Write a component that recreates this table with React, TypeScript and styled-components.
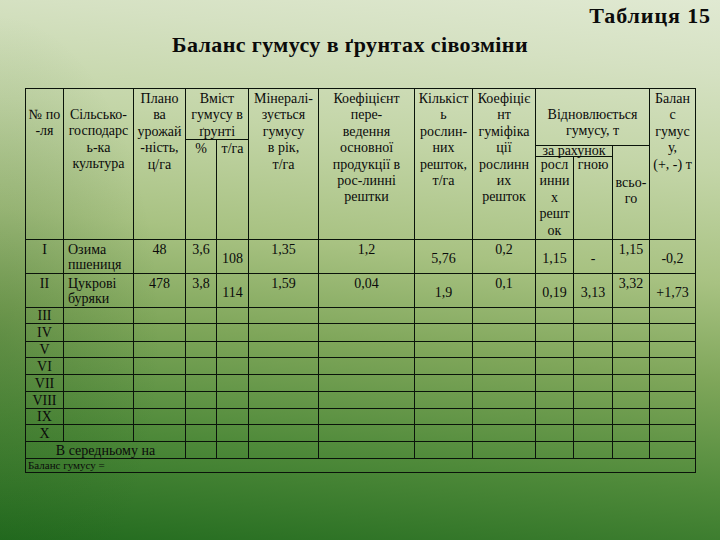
import React from 'react';
import styled, { createGlobalStyle } from 'styled-components';

const GlobalStyle = createGlobalStyle`
  html, body { margin: 0; padding: 0; }
  body { width: 720px; height: 540px; overflow: hidden; font-family: "Liberation Serif", "DejaVu Serif", serif; }
`;

const LINE = '#0a130a';

const Slide = styled.div`
  box-sizing: border-box;
  width: 720px;
  height: 540px;
  padding: 5px 8px 0 25px;
  display: flex;
  flex-direction: column;
  font-family: "Liberation Serif", "DejaVu Serif", serif;
  color: #0b0b0b;
  background:
    radial-gradient(ellipse 160px 320px at 0% 62%, rgba(35, 85, 25, 0.22), rgba(35, 85, 25, 0) 100%),
    linear-gradient(186deg, #e0e9d2 0%, #d5e1c2 12%, #c3d5a7 28%, #a8c282 46%, #7fa65a 62%, #4f8a3a 80%, #216a1e 100%);
`;

const TableNo = styled.div`
  align-self: flex-end;
  font-size: 22px;
  line-height: 22px;
  font-weight: bold;
  letter-spacing: 0.9px;
  margin-right: 1px;
`;

const Title = styled.h1`
  align-self: center;
  margin: 6px 37px 0 0;
  font-size: 22px;
  line-height: 24px;
  font-weight: bold;
  letter-spacing: 0.4px;
`;

const Grid = styled.div`
  margin-top: 31px;
  display: grid;
  width: max-content;
  grid-template-columns: 38px 70px 52px 31px 32px 70px 96px 58px 63px 38px 39px 37px 46px;
  grid-template-rows: 51px 6px 11px 83px 34px 34px 16px 18px 16px 17px 17px 17px 16px 17px 17px 14px;
  border-top: 1px solid ${LINE};
  border-left: 1px solid ${LINE};
`;

const Cell = styled.div<{ $col: string; $row: string; $pt?: number; $left?: boolean; $center?: boolean }>`
  grid-column: ${p => p.$col};
  grid-row: ${p => p.$row};
  box-sizing: border-box;
  border-right: 1px solid ${LINE};
  border-bottom: 1px solid ${LINE};
  padding-top: ${p => p.$pt ?? 0}px;
  padding-left: ${p => (p.$left ? 4 : 0)}px;
  text-align: ${p => (p.$left ? 'left' : 'center')};
  white-space: nowrap;
  font-size: 14px;
  line-height: 15px;
  display: ${p => (p.$center ? 'flex' : 'block')};
  align-items: center;
  justify-content: ${p => (p.$left ? 'flex-start' : 'center')};
  min-width: 0;
`;

const HeadCell = styled(Cell)<{ $lh?: number }>`
  line-height: ${p => p.$lh ?? 16.4}px;
`;

const AvgCell = styled(Cell)`
  font-size: 14px;
`;

const BalanceCell = styled(Cell)`
  font-size: 11px;
  line-height: 13px;
  padding-left: 2px;
`;

type V = [string, boolean];
const dataRows: { n: string; crop: string[]; vals: V[] }[] = [
  {
    n: 'I',
    crop: ['Озима', 'пшениця'],
    vals: [['48', false], ['3,6', false], ['108', true], ['1,35', false], ['1,2', false], ['5,76', true], ['0,2', false], ['1,15', true], ['-', true], ['1,15', false], ['-0,2', true]],
  },
  {
    n: 'II',
    crop: ['Цукрові', 'буряки'],
    vals: [['478', false], ['3,8', false], ['114', true], ['1,59', false], ['0,04', false], ['1,9', true], ['0,1', false], ['0,19', true], ['3,13', true], ['3,32', false], ['+1,73', true]],
  },
];

const romans = ['III', 'IV', 'V', 'VI', 'VII', 'VIII', 'IX', 'X'];

const lines = (arr: string[]) =>
  arr.map((t, i) => (
    <React.Fragment key={i}>
      {i > 0 && <br />}
      {t}
    </React.Fragment>
  ));

export default function App() {
  return (
    <>
      <GlobalStyle />
      <Slide>
        <TableNo>Таблиця 15</TableNo>
        <Title>Баланс гумусу в ґрунтах сівозміни</Title>
        <Grid>
          <HeadCell $col="1" $row="1 / 5" $pt={18}>{lines(['№ по', '-ля'])}</HeadCell>
          <HeadCell $col="2" $row="1 / 5" $pt={18}>{lines(['Сільсько-', 'господарс', 'ь-ка', 'культура'])}</HeadCell>
          <HeadCell $col="3" $row="1 / 5" $pt={2}>{lines(['Плано', 'ва', 'урожай', '-ність,', 'ц/га'])}</HeadCell>
          <HeadCell $col="4 / 6" $row="1 / 2" $pt={2}>{lines(['Вміст', 'гумусу в', 'ґрунті'])}</HeadCell>
          <HeadCell $col="4" $row="2 / 5" $pt={1}>%</HeadCell>
          <HeadCell $col="5" $row="2 / 5" $pt={1}>т/га</HeadCell>
          <HeadCell $col="6" $row="1 / 5" $pt={2}>{lines(['Мінералі-', 'зується', 'гумусу', 'в рік,', 'т/га'])}</HeadCell>
          <HeadCell $col="7" $row="1 / 5" $pt={2}>{lines(['Коефіцієнт', 'пере-', 'ведення', 'основної', 'продукції в', 'рос-линні', 'рештки'])}</HeadCell>
          <HeadCell $col="8" $row="1 / 5" $pt={2}>{lines(['Кількіст', 'ь', 'рослин-', 'них', 'решток,', 'т/га'])}</HeadCell>
          <HeadCell $col="9" $row="1 / 5" $pt={2}>{lines(['Коефіціє', 'нт', 'гуміфіка', 'ції', 'рослинн', 'их', 'решток'])}</HeadCell>
          <HeadCell $col="10 / 13" $row="1 / 3" $pt={18}>{lines(['Відновлюється', 'гумусу, т'])}</HeadCell>
          <HeadCell $col="10 / 12" $row="3 / 4" $lh={10}>за рахунок</HeadCell>
          <HeadCell $col="10" $row="4 / 5">{lines(['росл', 'инни', 'х', 'решт', 'ок'])}</HeadCell>
          <HeadCell $col="11" $row="4 / 5">гною</HeadCell>
          <HeadCell $col="12" $row="3 / 5" $pt={29}>{lines(['всьо-', 'го'])}</HeadCell>
          <HeadCell $col="13" $row="1 / 5" $pt={2}>{lines(['Балан', 'с', 'гумус', 'у,', '(+, -) т'])}</HeadCell>

          {dataRows.map((r, ri) => {
            const row = String(5 + ri);
            return (
              <React.Fragment key={r.n}>
                <Cell $col="1" $row={row} $pt={2}>{r.n}</Cell>
                <Cell $col="2" $row={row} $pt={2} $left>{lines(r.crop)}</Cell>
                {r.vals.map(([v, low], vi) => (
                  <Cell key={vi} $col={String(3 + vi)} $row={row} $pt={low ? 11 : 2}>{v}</Cell>
                ))}
              </React.Fragment>
            );
          })}

          {romans.map((n, ri) => {
            const row = String(7 + ri);
            return (
              <React.Fragment key={n}>
                <Cell $col="1" $row={row} $center>{n}</Cell>
                {Array.from({ length: 12 }, (_, ci) => (
                  <Cell key={ci} $col={String(2 + ci)} $row={row} />
                ))}
              </React.Fragment>
            );
          })}

          <AvgCell $col="1 / 4" $row="15" $center>В середньому на</AvgCell>
          {Array.from({ length: 10 }, (_, ci) => (
            <Cell key={ci} $col={String(4 + ci)} $row="15" />
          ))}
          <BalanceCell $col="1 / 14" $row="16" $left $center>Баланс гумусу =</BalanceCell>
        </Grid>
      </Slide>
    </>
  );
}
